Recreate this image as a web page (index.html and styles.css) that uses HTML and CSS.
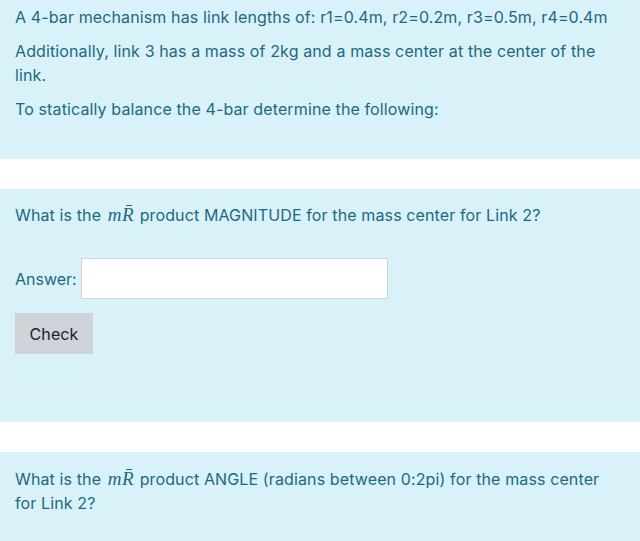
FILE: index.html
```html
<!DOCTYPE html>
<html>
<head>
<meta charset="utf-8">
<link rel="stylesheet" href="styles.css">
</head>
<body>
<div class="block intro">
  <p>A 4-bar mechanism has link lengths of: r1=0.4m, r2=0.2m, r3=0.5m, r4=0.4m</p>
  <p>Additionally, link 3 has a mass of 2kg and a mass center at the center of the link.</p>
  <p>To statically balance the 4-bar determine the following:</p>
</div>
<div class="gap"></div>
<div class="block q1">
  <p>What is the <span class="math">m<span class="rbar">R</span></span> product MAGNITUDE for the mass center for Link 2?</p>
  <div class="answer">
    <label class="label">Answer:</label>
    <input class="input" type="text">
  </div>
  <button class="check">Check</button>
</div>
<div class="gap"></div>
<div class="block q2">
  <p>What is the <span class="math">m<span class="rbar">R</span></span> product ANGLE (radians between 0:2pi) for the mass center for Link 2?</p>
</div>
</body>
</html>
```
FILE: styles.css
```css
html, body {
  margin: 0;
  padding: 0;
  background: #ffffff;
}
body {
  font-family: Inter, "Liberation Sans", Arial, sans-serif;
  font-size: 16px;
  line-height: 24px;
  letter-spacing: 0.12px;
  color: #1b6a80;
}
.block {
  background: #d9f1f9;
  padding: 0 20px 0 15px;
}
.block p {
  margin: 0 0 10px 0;
}
.intro {
  padding-top: 5px;
  padding-bottom: 28px;
}
.gap {
  height: 30px;
}
.q1 {
  padding-top: 14px;
  padding-bottom: 68px;
}
.q1 p {
  margin-bottom: 31px;
}
.q2 {
  padding-top: 15px;
  padding-bottom: 40px;
}
.math {
  font-family: "Liberation Serif", "DejaVu Serif", serif;
  font-style: italic;
  font-size: 19px;
  line-height: 20px;
  letter-spacing: 0.5px;
  margin: 0 1px 0 2px;
}
.rbar {
  position: relative;
  display: inline-block;
}
.rbar::before {
  content: "";
  position: absolute;
  left: 4px;
  right: 2px;
  top: 0px;
  height: 1px;
  background: #1b6a80;
}
.answer {
  display: flex;
  align-items: center;
  gap: 4px;
  margin-bottom: 14px;
}
.label {
  color: #1b6a80;
  letter-spacing: 0;
}
.input {
  box-sizing: border-box;
  width: 307px;
  height: 41px;
  border: 1px solid #ced4da;
  background: #ffffff;
  margin: 0;
  padding: 0 12px;
  font: inherit;
}
.check {
  box-sizing: border-box;
  height: 41px;
  width: 78px;
  border: none;
  background: #ced4da;
  color: #1d2125;
  font-family: Inter, "Liberation Sans", Arial, sans-serif;
  font-size: 16px;
  letter-spacing: 0.12px;
  padding: 0;
  margin: 0;
  display: block;
}
```
